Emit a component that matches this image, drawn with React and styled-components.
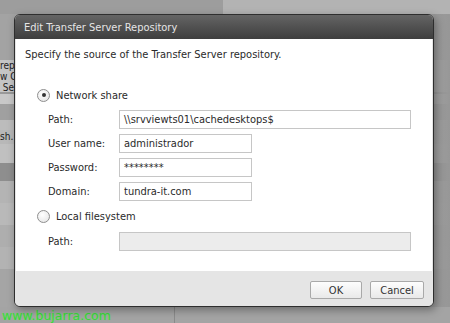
import React from 'react';
import styled, { createGlobalStyle } from 'styled-components';

const GlobalStyle = createGlobalStyle`
  html, body {
    margin: 0;
    padding: 0;
    width: 450px;
    height: 323px;
    overflow: hidden;
    background: #a9a9a9;
    font-family: "DejaVu Sans Condensed", "DejaVu Sans", Verdana, sans-serif;
    font-stretch: condensed;
  }
`;

const Page = styled.div`
  position: relative;
  width: 450px;
  height: 323px;
  display: flex;
  flex-direction: column;
`;

const TopBar = styled.div`
  display: flex;
  height: 14px;
`;

const TopSeg = styled.div`
  flex: ${(p) => p.$flex || 1};
  background: ${(p) => p.$bg};
`;

const Backdrop = styled.div`
  flex: 1;
  display: flex;
  flex-direction: column;
`;

const BgRow = styled.div`
  height: ${(p) => p.$h}px;
  flex-shrink: 0;
  box-sizing: border-box;
  padding-top: ${(p) => p.$pt || 0}px;
  background: linear-gradient(90deg, ${(p) => p.$bg} 0%, ${(p) => p.$bg} 85%, #979797 100%);
  color: #222;
  font-size: 10px;
  line-height: ${(p) => p.$lh || p.$h}px;
  white-space: pre;
  overflow: hidden;
`;

const BottomStrip = styled.div`
  height: 16px;
  flex-shrink: 0;
  display: flex;
  background: #a4a4a4;
`;

const Watermark = styled.div`
  width: 175px;
  display: flex;
  align-items: center;
  padding-left: 2px;
  box-sizing: border-box;
  border-right: 1px solid #8a8a8a;
  color: #3fd23f;
  font-family: "DejaVu Sans", sans-serif;
  font-stretch: normal;
  font-size: 12.5px;
  text-shadow: 0 0 1px #6f6;
`;

const Dialog = styled.div`
  position: absolute;
  left: 14px;
  top: 14px;
  width: 420px;
  height: 293px;
  display: flex;
  flex-direction: column;
  border-radius: 6px;
  border: 1px solid #2e2e2e;
  box-sizing: border-box;
  overflow: hidden;
  background: #e4e4e4;
  box-shadow: 2px 3px 8px rgba(0, 0, 0, 0.35);
`;

const TitleBar = styled.div`
  height: 24px;
  display: flex;
  align-items: center;
  padding-left: 9px;
  background: linear-gradient(#646464, #3e3e3e);
  color: #e6e6e6;
  font-size: 11px;
`;

const Body = styled.div`
  flex: 1;
  background: #fff;
  margin: 0 1px;
  padding: 9px 0 0 9px;
  color: #2a2a2a;
  font-size: 11px;
`;

const Intro = styled.div`
  height: 14px;
  line-height: 14px;
`;

const RadioRow = styled.label`
  display: flex;
  align-items: center;
  gap: 6px;
  margin-left: 12px;
  margin-top: ${(p) => p.$mt}px;
  height: 14px;
`;

const RadioDot = styled.span`
  width: 11px;
  height: 11px;
  border-radius: 50%;
  border: 1px solid #8e8e8e;
  background: radial-gradient(circle at 40% 35%, #fff, #e2e2e2);
  display: flex;
  align-items: center;
  justify-content: center;
  &::after {
    content: '';
    width: 4px;
    height: 4px;
    border-radius: 50%;
    background: ${(p) => (p.$checked ? '#333' : 'transparent')};
  }
`;

const Fields = styled.div`
  display: grid;
  grid-template-columns: 71px auto;
  row-gap: 5px;
  margin-left: 23px;
  margin-top: ${(p) => p.$mt}px;
  align-items: center;
`;

const FieldLabel = styled.span`
  line-height: 19px;
`;

const TextBox = styled.div`
  width: ${(p) => p.$w}px;
  height: 19px;
  box-sizing: border-box;
  border: 1px solid #c6c6c6;
  background: ${(p) => (p.$disabled ? '#ececec' : '#fff')};
  padding-left: 4px;
  line-height: 17px;
  font-size: 11px;
  color: #2a2a2a;
`;

const Footer = styled.div`
  height: 35px;
  display: flex;
  justify-content: flex-end;
  align-items: center;
  gap: 8px;
  padding: 3px 9px 0 0;
  box-sizing: border-box;
  background: #e5e5e5;
`;

const Button = styled.button`
  width: ${(p) => p.$w}px;
  height: 18px;
  border: 1px solid #a9a9a9;
  border-radius: 2px;
  background: linear-gradient(#fdfdfd, #e9e9e9);
  font-family: inherit;
  font-size: 11px;
  color: #333;
  padding: 0;
`;

const bgRows = [
  { h: 46, bg: '#a3a3a3' },
  { h: 32, bg: '#c5c5c5', text: 'rep\nw C\n Se', lh: 11, pt: 0 },
  { h: 2, bg: '#999999' },
  { h: 10, bg: '#c8c8c8' },
  { h: 16, bg: '#a0a0a0' },
  { h: 10, bg: '#bcbcbc' },
  { h: 14, bg: '#b8b8b8', text: 'sh.' },
  { h: 19, bg: '#c0c0c0' },
  { h: 18, bg: '#8e8e8e' },
  { h: 22, bg: '#b4b4b4' },
  { h: 22, bg: '#b9b9b9' },
  { h: 22, bg: '#aeaeae' },
  { h: 22, bg: '#b3b3b3' },
  { h: 38, bg: '#a5a5a5' },
];

const App = () => {
  return (
    <>
      <GlobalStyle />
      <Page>
        <TopBar>
          <TopSeg $flex={223} $bg="#9d9d9d" />
          <TopSeg $flex={227} $bg="#b3b3b3" />
        </TopBar>
        <Backdrop>
          {bgRows.map((r, i) => (
            <BgRow key={i} $h={r.h} $bg={r.bg} $lh={r.lh} $pt={r.pt}>
              {r.text || ''}
            </BgRow>
          ))}
          <BottomStrip>
            <Watermark>www.bujarra.com</Watermark>
          </BottomStrip>
        </Backdrop>

        <Dialog>
          <TitleBar>Edit Transfer Server Repository</TitleBar>
          <Body>
            <Intro>Specify the source of the Transfer Server repository.</Intro>
            <RadioRow $mt={26}>
              <RadioDot $checked />
              Network share
            </RadioRow>
            <Fields $mt={8}>
              <FieldLabel>Path:</FieldLabel>
              <TextBox $w={292}>\\srvviewts01\cachedesktops$</TextBox>
              <FieldLabel>User name:</FieldLabel>
              <TextBox $w={133}>administrador</TextBox>
              <FieldLabel>Password:</FieldLabel>
              <TextBox $w={133}>********</TextBox>
              <FieldLabel>Domain:</FieldLabel>
              <TextBox $w={133}>tundra-it.com</TextBox>
            </Fields>
            <RadioRow $mt={8}>
              <RadioDot />
              Local filesystem
            </RadioRow>
            <Fields $mt={9}>
              <FieldLabel>Path:</FieldLabel>
              <TextBox $w={292} $disabled />
            </Fields>
          </Body>
          <Footer>
            <Button $w={52}>OK</Button>
            <Button $w={54}>Cancel</Button>
          </Footer>
        </Dialog>
      </Page>
    </>
  );
};

export default App;
